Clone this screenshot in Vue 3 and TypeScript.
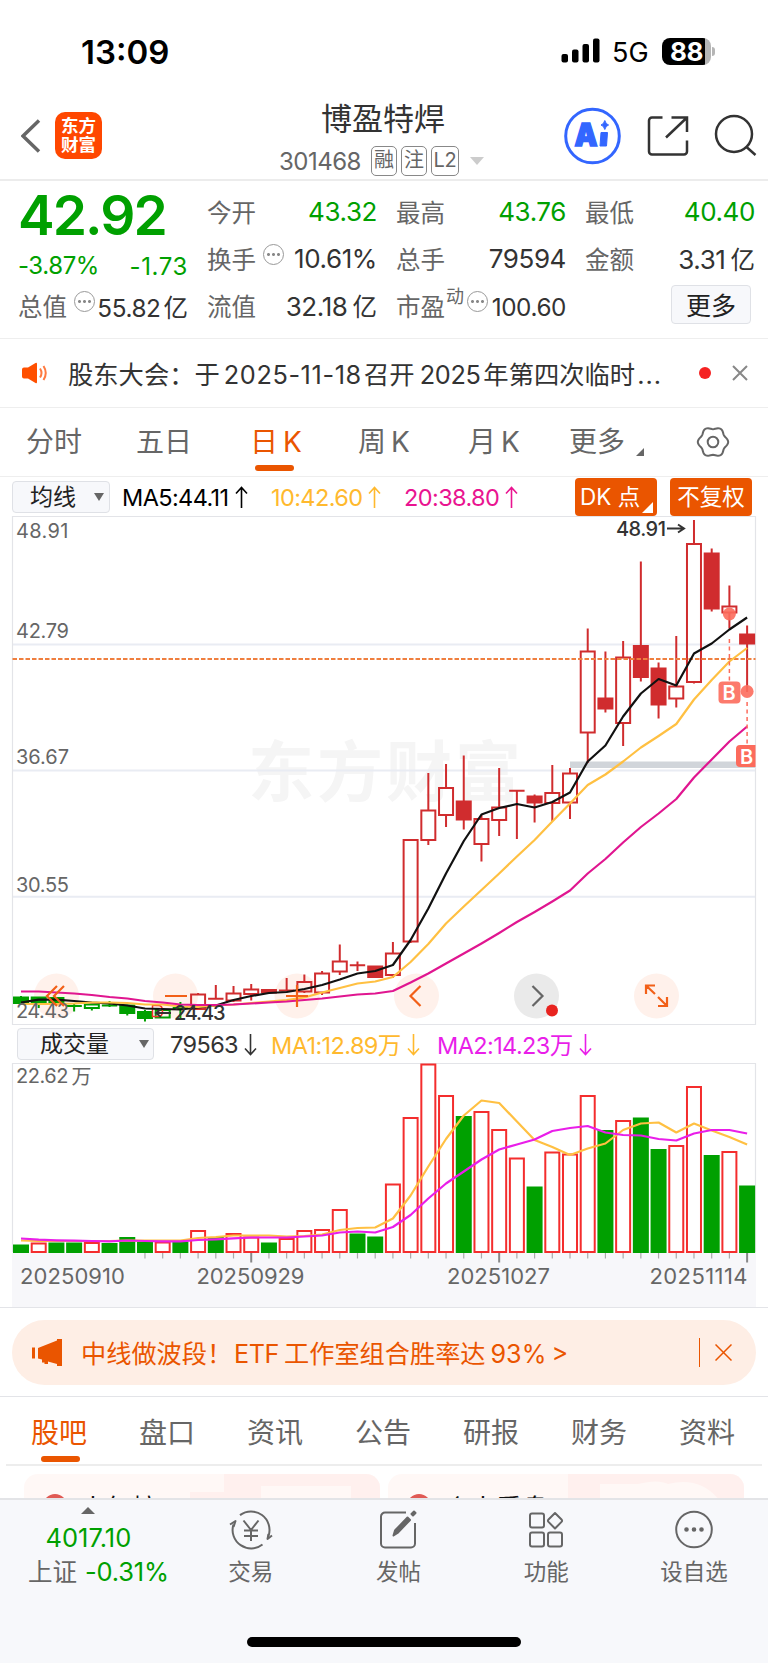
<script setup lang="ts">
type Candle = [high: number, top: number, bottom: number, low: number, kind: string]

const x = (i: number): number => 21 + i * 17.71

// kinds: g/r = solid green/red, G/R = outlined green/red, tg/tr = single stroke
const candles: Candle[] = [
  [996, 997.5, 1003, 1003, 'g'], [997, 997.5, 1002, 1008, 'g'], [998, 998, 1003, 1004, 'g'],
  [1003, 1006, 1006, 1011.5, 'tg'], [1004, 1004.5, 1008, 1010.5, 'G'], [1001, 1005.5, 1005.5, 1007, 'tg'],
  [1005, 1005.5, 1013, 1015.5, 'g'], [1010, 1012, 1018, 1021.5, 'g'], [1010, 1010, 1017.5, 1018, 'G'],
  [1002, 1008, 1008, 1018, 'tg'], [993, 994.5, 1009, 1010, 'R'], [985, 998.7, 998.7, 999, 'tr'],
  [986, 993.5, 1000.5, 1002, 'R'], [984, 989.5, 994, 1000.5, 'R'], [989, 990, 992.5, 993, 'r'],
  [978, 990.5, 990.5, 991, 'tr'], [974.5, 982, 991.5, 993, 'R'], [971, 973.5, 992.5, 995, 'R'],
  [944.5, 961.5, 971.5, 975, 'R'], [961.5, 965.3, 965.3, 971, 'tr'], [966, 966.5, 977, 978, 'r'],
  [942, 953.5, 975, 978, 'R'], [840, 840, 941.5, 943, 'R'], [773, 810.5, 840, 845, 'R'],
  [764, 788, 815, 827, 'R'], [755.5, 801.5, 819.5, 829.5, 'r'], [815, 819, 844, 861.5, 'R'],
  [768, 807.5, 820, 836, 'R'], [790, 790.7, 790.7, 839, 'tr'], [794.5, 796.5, 802.5, 822.5, 'r'],
  [765, 793, 803, 821, 'R'], [768, 773.5, 802.5, 819, 'R'], [628.5, 651.5, 732.5, 763, 'R'],
  [651.5, 698.5, 708.5, 712.5, 'r'], [641, 657.5, 723, 746, 'R'], [561.5, 646, 677, 681.5, 'r'],
  [662.5, 668.5, 704.5, 718.5, 'r'], [636, 686.5, 698.5, 707.5, 'R'], [520, 544, 682, 683.5, 'R'],
  [548.5, 553.5, 608.5, 611.5, 'r'], [585.5, 606.5, 612.5, 628.5, 'R'], [625.5, 634.5, 643.5, 692, 'r'],
]
const ma5 = [1002.5, 999.7, 999.7, 1001, 1002.5, 1003.5, 1005.5, 1008.5, 1009, 1009.5, 1007.5, 1005.5, 1000, 996, 993, 992, 989, 985, 979.5, 973.5, 971, 965, 940, 908.5, 873.5, 841, 814.5, 808, 804, 807.5, 802, 792.5, 761.5, 745.5, 716.5, 693.5, 679, 685.5, 653.5, 643.5, 629.5, 617.5]
const ma10 = [1004, 1004, 1004, 1003.5, 1002.5, 1002.5, 1003, 1004.5, 1004.5, 1006.5, 1007, 1005.5, 1004.5, 1003, 1001.5, 1000, 997.5, 992.5, 988, 983.5, 981.5, 977, 962, 944, 923.5, 906.5, 890, 873.5, 856.5, 840, 821.5, 803.5, 785, 774.5, 761.5, 747.5, 736, 724, 699.5, 680, 661.5, 648]
const ma20 = [991.5, 991.5, 992.5, 993.5, 995, 997, 998.5, 1001, 1002.5, 1004.5, 1005, 1005, 1004.5, 1003.5, 1002.5, 1001.5, 1000, 998.5, 996.5, 994.5, 993.5, 991, 982.5, 973.5, 963.5, 953.5, 943.5, 933, 922, 912, 901.5, 890.5, 873.5, 859, 842.5, 827, 813.5, 799, 777.5, 759.5, 741.5, 726.5]

const volTop = [1244.5, 1243.5, 1242.5, 1242.5, 1243, 1243, 1237, 1241.5, 1242.5, 1241.5, 1231, 1237, 1234, 1237.5, 1242.5, 1239, 1231, 1230, 1210, 1233.5, 1236.5, 1184.5, 1118, 1064.5, 1096, 1116, 1112, 1130, 1158.5, 1186.5, 1152.5, 1154.5, 1096, 1130, 1121, 1117.5, 1149, 1146, 1087, 1155, 1152, 1185.5]
const volKind = 'grggrgggrgrgrrgrrrrggrrrrgrrrgrrrgrggrrgrg'
const vma1 = [1240.5, 1241, 1241, 1241, 1241, 1241, 1240.7, 1240.7, 1240.7, 1240.5, 1238, 1237, 1235.5, 1235.5, 1235.5, 1236.5, 1236, 1234.5, 1230, 1228, 1227.5, 1218.5, 1195.5, 1166.5, 1139, 1115.5, 1100.5, 1103, 1121.5, 1140, 1147, 1155, 1148.5, 1143.5, 1130, 1123.5, 1122.5, 1132.5, 1123.5, 1130.5, 1137, 1144.5]
const vma2 = [1238.5, 1239.7, 1240.3, 1240.7, 1241, 1241.3, 1240.5, 1241, 1241.3, 1241.3, 1240, 1239.3, 1238.3, 1237.5, 1237.5, 1237.5, 1236.5, 1235.5, 1232.5, 1231.5, 1232.5, 1227, 1215, 1198.5, 1183.5, 1171.5, 1159.5, 1149.5, 1144.5, 1139.5, 1131, 1128, 1126, 1132.5, 1135, 1135.5, 1139, 1140.5, 1133.5, 1130, 1130, 1133.5]

const line = (ys: number[]): string => ys.map((y, i) => `${x(i).toFixed(1)},${y}`).join(' ')
const isGreen = (k: string): boolean => k.toLowerCase().includes('g')
const isSolid = (k: string): boolean => k === 'g' || k === 'r'
const ticks = Array.from({ length: 35 }, (_, i) => i + 7)
const longTicks = [13, 27, 41]

// six-lobed outline of the settings icon
const gear = Array.from({ length: 72 }, (_, i) => {
  const a = (i * Math.PI) / 36
  const r = 14 + 1.2 * Math.cos(6 * a)
  return `${(r * Math.cos(a)).toFixed(2)},${(r * Math.sin(a)).toFixed(2)}`
}).join(' ')

const periods = ['分时', '五日', '日 K', '周 K', '月 K', '更多']
const sections = ['股吧', '盘口', '资讯', '公告', '研报', '财务', '资料']
const up = 'M6.5 22V1.500M1 7.500l5.500-6 5.500 6'
const down = 'M6.5 1V21.500M1 15.500l5.500 6 5.500-6'
</script>

<template>
  <div class="screen">
    <div class="status">
      <span class="clock">13:09</span>
      <svg class="signal" width="40" height="26" viewBox="0 0 40 26">
        <rect x="0.500" y="16" width="6.500" height="8.500" rx="2" /><rect x="11" y="11.500" width="6.500" height="13" rx="2" />
        <rect x="21.500" y="6" width="6.500" height="18.500" rx="2" /><rect x="32" y="0.500" width="6.500" height="24" rx="2" />
      </svg>
      <span class="net">5G</span>
      <span class="battery"><b>88</b></span><i class="cap"></i>
    </div>

    <header class="head">
      <svg class="back" width="20" height="34" viewBox="0 0 20 34"><path d="M18 1.500 2 17l16 15.500" /></svg>
      <div class="logo"><span>东方</span><span>财富</span></div>
      <div class="title">
        <h1>博盈特焊</h1>
        <div class="code"><span class="num">301468</span><em>融</em><em>注</em><em class="l2">L2</em><i></i></div>
      </div>
      <svg class="tools" width="210" height="64" viewBox="558 104 210 64">
        <circle cx="592.500" cy="136" r="26.800" class="ai-ring" />
        <text x="574.500" y="146" class="ai" textLength="23" lengthAdjust="spacingAndGlyphs">A</text>
        <path d="M601 132.500h6.500l-1 13.500h-6.500z" class="ai-fill" />
        <path d="M604.800 120.500q1 3.800 3.800 4.500-2.800.700-3.800 4.500-1-3.800-3.800-4.500 2.800-.7 3.800-4.500z" class="ai-fill" />
        <path d="M662.500 117.500H652a3 3 0 0 0-3 3V151.500a3 3 0 0 0 3 3h32a3 3 0 0 0 3-3v-11M671.500 117.500H687v14.500M687 117.500l-21 20" class="stroke" />
        <circle cx="734" cy="134" r="18" class="stroke" /><path d="m746.500 147 9 8" class="stroke" />
      </svg>
    </header>

    <section class="quote">
      <div class="main">
        <div class="price">42.92</div>
        <div class="chg"><span>-3.87%</span><span class="abs">-1.73</span></div>
        <div class="cell"><label>总值</label><i class="dots"></i><span class="sm">55.82<u>亿</u></span></div>
      </div>
      <div class="col">
        <div class="cell"><label>今开</label><span class="green">43.32</span></div>
        <div class="cell"><label>换手</label><i class="dots"></i><span>10.61%</span></div>
        <div class="cell"><label>流值</label><span>32.18<u>亿</u></span></div>
      </div>
      <div class="col">
        <div class="cell"><label>最高</label><span class="green">43.76</span></div>
        <div class="cell"><label>总手</label><span>79594</span></div>
        <div class="cell"><label>市盈</label><sup>动</sup><i class="dots"></i><span class="sm">100.60</span></div>
      </div>
      <div class="col">
        <div class="cell"><label>最低</label><span class="green">40.40</span></div>
        <div class="cell"><label>金额</label><span>3.31<u>亿</u></span></div>
        <div class="cell"><button class="more">更多</button></div>
      </div>
    </section>

    <section class="notice">
      <svg class="speaker" width="26" height="22" viewBox="0 0 26 22">
        <path d="M2 5.500h4L13.500 1q1.500-.8 1.500 1v18q0 1.800-1.500 1L6 16.500H2q-2 0-2-2v-7q0-2 2-2z" />
        <path d="M18 6.500q3 4.500 0 9M21.500 4q4.500 7 0 14" class="wave" />
      </svg>
      <p><span>股东大会：于</span><span class="d1">2025-11-18</span><span>召开</span><span class="d2">2025</span><span>年第四次临时</span><span class="el">...</span></p>
      <i class="red"></i>
      <svg width="16" height="16" viewBox="0 0 16 16"><path d="m1 1 14 14M15 1 1 15" class="close" /></svg>
    </section>

    <nav class="periods">
      <span v-for="(p, i) in periods" :key="p" :class="['p' + i, { on: i === 2 }]">{{ p }}</span>
      <i class="corner"></i>
      <svg width="34" height="34" viewBox="-17 -17 34 34"><polygon :points="gear" /><circle r="5.300" /></svg>
    </nav>

    <section class="legend top">
      <div class="select s1">均线<i></i></div>
      <span class="k1">MA5:44.11<svg width="13" height="23" viewBox="0 0 13 23"><path :d="up" /></svg></span>
      <span class="k2">10:42.60<svg width="13" height="23" viewBox="0 0 13 23"><path :d="up" /></svg></span>
      <span class="k3">20:38.80<svg width="13" height="23" viewBox="0 0 13 23"><path :d="up" /></svg></span>
      <div class="chip dk">DK 点<i></i></div><div class="chip">不复权</div>
    </section>

    <svg class="chart" width="768" height="510" viewBox="0 516 768 510">
      <text x="248" y="796" class="watermark" textLength="273">东方财富</text>
      <path d="M12.500 644.500h743M12.500 770.500h743M12.500 896.800h743" class="grid" />
      <path d="M12.500 516.500h743v508h-743z" class="frame" />
      <rect x="570" y="761.500" width="185" height="6.500" class="band" />
      <g class="axis">
        <text x="16" y="538" textLength="52.500">48.91</text><text x="16" y="638" textLength="53">42.79</text>
        <text x="16" y="764" textLength="53">36.67</text><text x="16" y="891.500" textLength="53">30.55</text>
      </g>
      <g class="pads">
        <circle v-for="cx in [56.500, 175.500, 297, 416.500, 656.500]" :key="cx" :cx="cx" cy="996" r="22.500" />
        <circle cx="536.500" cy="996" r="22.500" class="grey" />
      </g>
      <g v-for="(c, i) in candles" :key="i" :class="isGreen(c[4]) ? 'down' : 'up'">
        <template v-if="c[4].startsWith('t')">
          <path :d="`M${x(i) - 7.700} ${c[1]}h15.400M${x(i)} ${c[0]}V${c[3]}`" />
        </template>
        <template v-else>
          <path :d="`M${x(i)} ${c[0]}V${c[1]}M${x(i)} ${c[2]}V${c[3]}`" />
          <rect :x="x(i) - 7" :y="c[1]" width="14" :height="c[2] - c[1]" :class="{ solid: isSolid(c[4]) }" />
        </template>
      </g>
      <path d="M152.500 1005.500h6q4 0 4 5.500t-4 5.500h-6z" class="mini" />
      <path d="M12.500 659h743" class="ref" />
      <polyline :points="line(ma5)" class="m5" /><polyline :points="line(ma10)" class="m10" /><polyline :points="line(ma20)" class="m20" />
      <text x="16" y="1017.500" class="axis" textLength="53">24.43</text>
      <text x="174" y="1020" class="mark" textLength="51.500">24.43</text><path d="M171 1013h-15m5-4-5 4 5 4" class="arrow" />
      <text x="616" y="536" class="mark" textLength="50">48.91</text><path d="M667 528.500h16m-5-4 6 4-6 4" class="arrow" />
      <g class="buy">
        <path d="M729.400 639v42M747.100 702v42" />
        <circle cx="729.400" cy="614" r="6.500" /><circle cx="747.100" cy="691.500" r="6.500" />
        <rect x="718.500" y="681.500" width="22" height="22" rx="4" /><path d="M740 745h15.500v22H740q-4 0-4-4v-14q0-4 4-4z" class="tag" />
        <text x="722.500" y="700">B</text><text x="740" y="763.500">B</text>
      </g>
      <g class="glyphs">
        <path d="m57 986-10 10 10 10m7-20-10 10 10 10M165 996h22M286 996h22m-11-11v22M420.500 986l-10 10 10 10M646 994v-8.500h9m-9 0 9 8.500M667 997v9h-9m9 0-9-9" />
        <path d="m532.500 986 10 10-10 10" class="dark" />
        <circle cx="552" cy="1010.500" r="6" />
      </g>
    </svg>

    <section class="legend vol">
      <div class="select s2">成交量<i></i></div>
      <span class="v0">79563<svg width="13" height="23" viewBox="0 0 13 23"><path :d="down" /></svg></span>
      <span class="v1">MA1:12.89万<svg width="13" height="23" viewBox="0 0 13 23"><path :d="down" /></svg></span>
      <span class="v2">MA2:14.23万<svg width="13" height="23" viewBox="0 0 13 23"><path :d="down" /></svg></span>
    </section>

    <svg class="volume" width="768" height="246" viewBox="0 1062 768 246">
      <rect x="12" y="1252.500" width="744" height="55" class="foot" />
      <path d="M12.500 1252V1063.500h743V1252" class="frame" /><path d="M0 1307.500h768" class="frame" />
      <text x="16" y="1083" class="axis" textLength="52.500">22.62</text><text x="71.500" y="1083.500" class="axis">万</text>
      <template v-for="(t, i) in volTop" :key="i">
        <rect v-if="volKind[i] === 'g'" :x="x(i) - 8" :y="t" width="16" :height="1253 - t" class="vg" />
        <rect v-else :x="x(i) - 7" :y="t" width="14" :height="1252 - t" class="vr" />
      </template>
      <path v-for="t in ticks" :key="t" :d="`M${x(t)} 1253v${longTicks.includes(t) ? 9.500 : 5.500}`" :class="['tick', { major: longTicks.includes(t) }]" />
      <polyline :points="line(vma1)" class="m10" /><polyline :points="line(vma2)" class="n2" />
      <g class="date">
        <text x="20" y="1284" textLength="105">20250910</text><text x="196.500" y="1284" textLength="108">20250929</text>
        <text x="447" y="1284" textLength="103">20251027</text><text x="649.500" y="1284" textLength="98">20251114</text>
      </g>
    </svg>

    <section class="promo-wrap">
      <div class="promo">
        <svg class="horn" width="32" height="28" viewBox="0 0 32 28"><path d="M0 8.500h3v11H0zM6 9 25 1.500V0h5v27h-5v-2L16 22.500V25h-3.500v-1.500H10v-3L6 19.500z" /></svg>
        <p><span>中线做波段！</span><span class="etf">ETF</span><span>工作室组合胜率达</span><span class="pct">93% &gt;</span></p>
        <i></i><svg width="17" height="17" viewBox="0 0 17 17"><path d="m.5.5 16 16M16.500.5l-16 16" /></svg>
      </div>
    </section>

    <nav class="sections"><span v-for="(s, i) in sections" :key="s" :class="{ on: i === 0 }">{{ s }}</span></nav>

    <section class="cards">
      <div class="card"><i></i><span>人气榜</span><svg width="190" height="40" viewBox="0 0 190 40"><path d="M0 18V40h190V0H34v18z" /><path d="M71 12h90v28H71z" class="hi" /></svg></div>
      <div class="card"><i></i><span>个人看盘</span><svg width="176" height="40" viewBox="0 0 176 40"><path d="M0 0h176v40H0z" /><path d="M32 10h38q20-5 30 0 40-10 60 30H32z" class="hi" /><path d="M48 40V30h20v10zm38 0q4-11 16-11t16 11z" class="lo" /></svg></div>
    </section>

    <footer class="dock">
      <div class="index"><i></i><span class="val">4017.10</span><span class="row"><u>上证</u><b>-0.31%</b></span></div>
      <div class="item">
        <svg width="44" height="40" viewBox="0 0 44 40"><path d="M11 5.100A18.500 18.500 0 0 1 39.500 26M33.500 34.500A18.500 18.500 0 0 1 4.400 14.500M14.500 10.500l7.500 9.500 7.500-9.500M22 20v11M15 20.500h14M15 26h14" /><path d="M43 25.500 38.500 29l1-5M1 14.500 6.500 11l-2 6" /></svg>
        <span>交易</span>
      </div>
      <div class="item">
        <svg width="44" height="40" viewBox="0 0 44 40"><path d="M30 2.500H9a4 4 0 0 0-4 4v27a4 4 0 0 0 4 4h26a4 4 0 0 0 4-4V13" /><path d="M17.500 25.500 19 20.500 31.500 7.500l2.500 2.500L21.500 23zM35.500 4l2.500-2.500 1.500 1.500L37 5.500z" class="pen" /></svg>
        <span>发帖</span>
      </div>
      <div class="item">
        <svg width="44" height="40" viewBox="0 0 44 40"><rect x="6" y="3.500" width="14" height="14" rx="2" /><rect x="6" y="22.500" width="14" height="14" rx="2" /><rect x="24" y="22.500" width="14" height="14" rx="2" /><path d="m31 3 6.500 6.500q1.200 1.200 0 2.400L31 18.500l-6.500-6.600q-1.200-1.200 0-2.400z" /></svg>
        <span>功能</span>
      </div>
      <div class="item">
        <svg width="44" height="40" viewBox="0 0 44 40"><circle cx="22" cy="19.500" r="17.800" /><g class="pen"><circle cx="14.500" cy="19.500" r="1.300" /><circle cx="22" cy="19.500" r="1.300" /><circle cx="29.500" cy="19.500" r="1.300" /></g></svg>
        <span>设自选</span>
      </div>
      <div class="home"></div>
    </footer>
  </div>
</template>

<style>
body { background: #fff; }
</style>

<style scoped>
* { box-sizing: border-box; }
.screen { width: 768px; height: 1663px; overflow: hidden; background: #fff; color: #333; font-family: Inter, "Noto Sans CJK SC", sans-serif; font-size: 25px; }
svg { display: block; flex: none; }
i, em { font-style: normal; display: block; flex: none; }
u { text-decoration: none; }
p, h1 { margin: 0; }
.status { height: 80px; padding-top: 22px; display: flex; align-items: center; color: #000; }
.clock { font-size: 33px; font-weight: 600; width: 91px; margin-left: 81px; line-height: 40px; padding-top: 1px; }
.signal { margin-left: 389px; }
.net { margin-left: 11px; width: 38px; font-size: 27px; padding-top: 2px; }
.battery { margin-left: 12px; width: 49px; height: 27px; border-radius: 8px; background: linear-gradient(90deg, #000 43px, #b5b5b5 43px); color: #fff; font-size: 26px; line-height: 27px; text-align: center; }
.battery b { font-weight: 700; letter-spacing: -.5px; }
.cap { width: 3px; height: 9px; margin-left: 1px; background: #b5b5b5; border-radius: 0 4px 4px 0; }
.head { height: 101px; border-bottom: 2px solid #ececec; display: flex; padding-left: 21px; }
.back { margin-top: 39px; }
.back path { fill: none; stroke: #666; stroke-width: 3.500; }
.logo { margin: 32px 0 0 14px; width: 47px; height: 47px; border-radius: 10px; background: #ff4700; color: #fff; font-weight: 700; font-size: 17.500px; line-height: 19px; display: flex; flex-direction: column; align-items: center; padding-top: 4px; }
.title { flex: none; width: 456px; display: flex; flex-direction: column; align-items: flex-start; padding: 20px 0 0 105px; margin-left: 72px; }
h1 { font-size: 31px; font-weight: 400; line-height: 38px; margin-left: 42px; white-space: nowrap; }
.code { display: flex; align-items: center; color: #666; height: 32px; margin-top: 7px; }
.num { font-size: 24px; width: 92px; letter-spacing: -.5px; }
.code em { width: 26px; height: 30px; border: 1.500px solid #888; border-radius: 5px; margin-right: 4px; font-size: 20px; line-height: 27px; display: flex; justify-content: center; }
.code .l2 { width: 28px; letter-spacing: -.3px; }
.code i { border: 7px solid transparent; border-top: 8px solid #ccc; border-bottom: 0; margin-left: 7px; }
.tools { margin: 24px 0 0 -72px; }
.ai-ring { fill: none; stroke: #36f; stroke-width: 3; }
.ai { font: 900 31px Inter; fill: #36f; stroke: #36f; stroke-width: 1.500; }
.ai-fill { fill: #36f; stroke: #36f; stroke-width: 1; stroke-linejoin: round; }
.stroke { fill: none; stroke: #333; stroke-width: 2.500; }
.quote { height: 158px; padding: 7px 13px 0 18px; display: flex; border-bottom: 1px solid #eee; }
.main { width: 170px; color: #00a000; }
.price { font-size: 55px; font-weight: 600; line-height: 55px; height: 58px; letter-spacing: -1.900px; }
.chg { display: flex; justify-content: space-between; height: 36px; line-height: 39px; font-size: 24px; letter-spacing: -.4px; }
.abs { letter-spacing: .6px; padding-top: 1px; }
.main .cell { color: #333; }
.col { width: 170px; margin-left: 19px; }
.cell { height: 47px; display: flex; align-items: center; white-space: nowrap; }
.cell label { color: #666; font-size: 24.500px; }
.cell span { margin-left: auto; font-size: 26px; letter-spacing: -.4px; }
.cell .sm { font-size: 24.300px; letter-spacing: -.4px; padding-top: 2px; }
.cell u { font-size: 24.500px; margin-left: 5px; letter-spacing: 0; }
.cell .sm u { margin-left: 3px; }
.green { color: #00a000; }
.dots { width: 21px; height: 21px; border: 1.500px solid #999; border-radius: 50%; margin: -9px -8px 0 7px; background: radial-gradient(circle, #888 1.200px, transparent 1.700px) center / 5px 5px no-repeat, radial-gradient(circle, #888 1.200px, transparent 1.700px) 2px center / 5px 5px no-repeat, radial-gradient(circle, #888 1.200px, transparent 1.700px) 12px center / 5px 5px no-repeat; }
.cell sup { font-size: 18px; color: #666; line-height: 20px; margin: -18px 0 0 1px; }
.cell sup + .dots { margin-left: 3px; }
.more { margin: -3px 4px 0 auto; width: 80px; height: 39px; font: 25px/34px "Noto Sans CJK SC"; color: #222; padding: 0; background: #f7f8fb; border: 1.500px solid #dfe1e6; border-radius: 4px; }
.notice { height: 69px; border-bottom: 1px solid #eee; display: flex; align-items: center; padding: 0 21px 0 22px; }
.speaker { fill: #ff5000; width: 26px; }
.wave { fill: none; stroke: #ff7a40; stroke-width: 2; }
.notice p { margin-left: 20px; width: 594px; display: flex; align-items: baseline; white-space: nowrap; font-size: 25.300px; }
.d1 { width: 145px; padding-left: 4px; letter-spacing: .6px; } .d2 { width: 69px; padding-left: 5px; letter-spacing: -.3px; }
.el { letter-spacing: 1px; padding-left: 2px; }
.red { width: 12px; height: 12px; border-radius: 50%; background: #f52222; margin: 0 21px 0 37px; }
.close { stroke: #888; stroke-width: 2; }
.periods { height: 69px; border-bottom: 1px solid #eee; color: #666; display: flex; align-items: center; font-size: 28px; padding-left: 26px; white-space: nowrap; }
.periods span { flex: none; width: 110px; line-height: 69px; height: 68px; position: relative; }
.periods .p2, .periods .p3, .periods .p4 { word-spacing: -3px; }
.periods .p1 { width: 113px; }
.periods .p2 { width: 111px; padding-left: 1px; } .periods .p3 { width: 110px; margin-left: -2px; } .periods .p4 { width: 101px; } .periods .p5 { width: 56px; }
.on { color: #ea5500; }
.periods .on::after { content: ""; position: absolute; left: 6px; bottom: 5px; width: 39px; height: 6px; border-radius: 3px; background: #ea5500; }
.corner { border-bottom: 8px solid #666; border-left: 8px solid transparent; margin: 20px 52px 0 11px; }
.periods svg { fill: none; stroke: #666; stroke-width: 2; }
.legend { display: flex; align-items: center; white-space: nowrap; font-size: 23.500px; }
.legend span { display: flex; align-items: center; flex: none; }
.legend svg { margin-left: 6px; fill: none; stroke: currentColor; stroke-width: 1.600; }
.top { height: 39px; padding-left: 12px; }
.select { height: 32px; border: 1.500px solid #dfe1e6; border-radius: 4px; background: #f7f8fb; display: flex; align-items: center; font-size: 23px; line-height: 28px; color: #222; flex: none; }
.select i { border: 5px solid transparent; border-top: 8px solid #666; border-bottom: 0; margin-left: auto; }
.s1 { width: 98px; padding: 0 5px 0 17px; } .s2 { width: 137px; padding: 0 4px 0 22px; }
.k1, .k2, .k3 { letter-spacing: -.6px; padding-top: 2px; }
.k1 { color: #000; width: 149px; margin-left: 12px; } .k2 { color: #ffb92e; width: 133px; } .k3 { color: #e91490; width: 170px; }
.chip { width: 82px; height: 38px; background: #ea5500; color: #fff; border-radius: 4px; font-size: 22.500px; line-height: 38px; text-align: center; margin-left: 13px; flex: none; }
.dk { margin-left: 1px; position: relative; text-align: left; padding-left: 5px; }
.dk i { position: absolute; right: 4px; bottom: 3px; border-bottom: 11px solid #fff; border-left: 11px solid transparent; }
.vol { height: 36px; padding-left: 17px; }
.v0 { width: 101px; margin-left: 16px; letter-spacing: -.6px; } .v1 { color: #ffb92e; width: 166px; letter-spacing: -.6px; } .v2 { color: #e91ee9; letter-spacing: -.6px; }
.frame { fill: none; stroke: #e3e4e8; stroke-width: 1.200; }
.grid { stroke: #e9ecf3; stroke-width: 2; }
.band { fill: #d1d5da; }
.watermark { font: 700 66px "Noto Sans CJK SC"; fill: #f5f5f5; }
.axis { font-size: 20px; fill: #666; }
.pads circle { fill: #fff1eb; } .pads .grey { fill: #eaeaea; }
.up path, .up rect { stroke: #d02c2e; stroke-width: 2; fill: #fff; } .up .solid { fill: #d02c2e; }
.up rect:not(.solid) { fill-opacity: 0; }
.down path, .down rect { stroke: #00a000; stroke-width: 2; fill: none; } .down .solid { fill: #00a000; }
.mini { fill: none; stroke: #f5322d; stroke-width: 1.500; }
.ref { stroke: #ef7f3f; stroke-width: 2; stroke-dasharray: 4.500 2; }
polyline { fill: none; stroke-width: 2.200; stroke-linejoin: round; }
.m5 { stroke: #111; } .m10 { stroke: #ffc042; } .m20 { stroke: #e01690; } .n2 { stroke: #e91ee9; }
.mark { font-size: 20px; font-weight: 500; fill: #333; } .arrow { fill: none; stroke: #333; stroke-width: 2; }
.buy path { stroke: #fc6b5c; stroke-width: 1.500; stroke-dasharray: 4 3.500; } .buy circle, .buy rect { fill: #fc6b5c; fill-opacity: .9; } .buy .tag { fill: #fc6b5c; stroke: none; }
.buy text { font-size: 20px; font-weight: 600; fill: #fff; }
.glyphs path { fill: none; stroke: #f26018; stroke-width: 2.200; } .glyphs .dark { stroke: #666; } .glyphs circle { fill: #e8231f; }
.foot { fill: #f7f7fa; }
.vg { fill: #00a000; } .vr { fill: #fff; stroke: #f42d2d; stroke-width: 2; }
.tick { stroke: #aaa; stroke-width: 1.200; } .major { stroke: #888; stroke-width: 2; }
.date text { font-size: 22px; fill: #666; }
.promo-wrap { height: 89px; padding: 12px 12px 0; border-bottom: 1.500px solid #e3e4e8; }
.promo { height: 65px; border-radius: 33px; background: #feeee5; display: flex; align-items: center; padding: 0 24px 0 20px; color: #ea5500; }
.horn { fill: #ea5500; }
.promo p { margin: -2px 0 0 17px; width: 618px; display: flex; align-items: baseline; font-size: 25.200px; white-space: nowrap; }
.etf { width: 50px; letter-spacing: -.5px; } .pct { margin-left: 5px; word-spacing: -2px; }
.promo p span:first-child { width: 153px; }
.promo i { width: 1.500px; height: 29px; background: #ea5500; margin-right: 15px; }
.promo svg path { stroke: #ea5500; stroke-width: 1.500; } .promo .horn path { stroke: none; }
.sections { height: 69px; margin: 0 6px; border-bottom: 2px solid #ededed; padding: 0 27px 0 25px; display: flex; justify-content: space-between; color: #666; font-size: 28px; line-height: 72px; }
.sections span { position: relative; height: 67px; }
.sections .on::after { content: ""; position: absolute; left: 10px; bottom: 2px; width: 39px; height: 6px; border-radius: 3px; background: #ea5500; }
.cards { height: 32px; overflow: hidden; padding: 8px 24px 0; display: flex; gap: 8px; }
.card { width: 356px; height: 100px; border-radius: 14px; background: #fff8f6; overflow: hidden; display: flex; align-items: flex-start; }
.card i { width: 24px; height: 24px; border-radius: 50%; background: #e05a54; margin: 20px 13px 0 19px; }
.card span { font-size: 26px; line-height: 30px; color: #111; margin-top: 20px; width: 110px; white-space: nowrap; }
.card svg { margin-left: auto; fill: #fff0ee; } .card .hi { fill: #fff8f6; } .card .lo { fill: #fdeae7; }
.dock { height: 165px; border-top: 2px solid #e3e4e7; background: #f7f8fb; display: flex; position: relative; color: #666; }
.index { width: 177px; display: flex; flex-direction: column; align-items: center; }
.index i { border: 7px solid transparent; border-bottom: 7px solid #666; border-top: 0; margin-top: 7px; }
.val { color: #00a000; font-size: 25.500px; line-height: 30px; margin-top: 9px; }
.row { display: flex; align-items: center; line-height: 36px; font-size: 24.500px; margin: 1px 0 0 20px; }
.row b { font-weight: 400; font-size: 25.500px; color: #00a000; margin-left: 8px; letter-spacing: -.2px; }
.item { width: 148px; display: flex; flex-direction: column; align-items: center; font-size: 22.500px; line-height: 34px; padding-top: 10px; }
.item span { margin-top: 5px; }
.item svg { fill: none; stroke: #666; stroke-width: 2; stroke-linejoin: round; } .item .pen { fill: #666; }
.home { position: absolute; left: 247px; bottom: 16px; width: 274px; height: 10px; border-radius: 5px; background: #000; }
</style>
